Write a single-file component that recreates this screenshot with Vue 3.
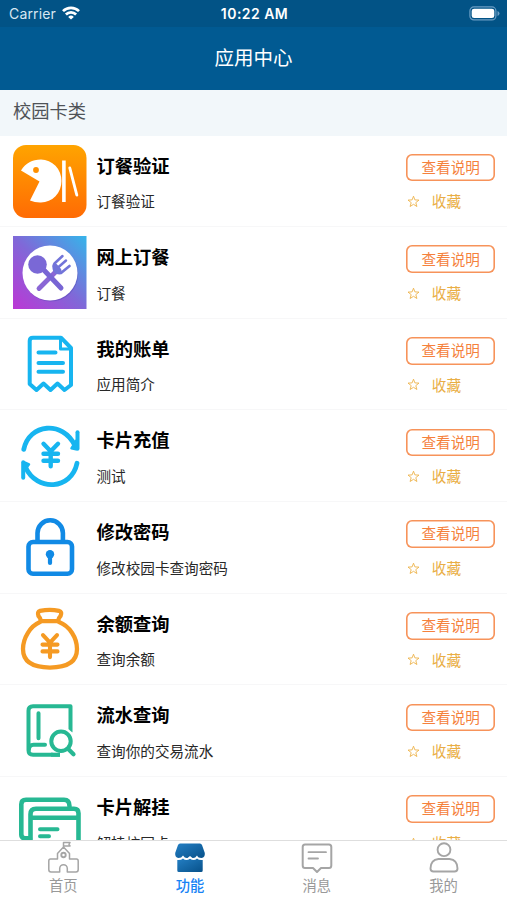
<script setup>
const apps = [
  { icon: 'pac', title: '订餐验证', desc: '订餐验证' },
  { icon: 'food', title: '网上订餐', desc: '订餐' },
  { icon: 'bill', title: '我的账单', desc: '应用简介' },
  { icon: 'recharge', title: '卡片充值', desc: '测试' },
  { icon: 'lock', title: '修改密码', desc: '修改校园卡查询密码' },
  { icon: 'bag', title: '余额查询', desc: '查询余额' },
  { icon: 'book', title: '流水查询', desc: '查询你的交易流水' },
  { icon: 'cards', title: '卡片解挂', desc: '解挂校园卡' },
]
const tabs = [
  { icon: 'home', label: '首页' },
  { icon: 'shop', label: '功能', active: true },
  { icon: 'message', label: '消息' },
  { icon: 'user', label: '我的' },
]
</script>

<template>
  <div class="screen">
    <div class="status">
      <div class="carrier">
        <span>Carrier</span>
        <svg class="wifi" width="18" height="14" viewBox="0 0 18 14">
          <g fill="none" stroke="#fff" stroke-width="2.7">
            <path d="M1 5.1a11.4 11.4 0 0 1 16 0" />
            <path d="M3.9 8.5a7.2 7.2 0 0 1 10.2 0" />
          </g>
          <path d="M9 13.6 6.2 10.9a4 4 0 0 1 5.6 0z" fill="#fff" />
        </svg>
      </div>
      <div class="time">10:22 AM</div>
      <div class="battery">
        <svg width="31" height="15" viewBox="0 0 31 15">
          <rect x=".9" y=".9" width="26" height="13" rx="4" fill="none" stroke="#6b9dc4" stroke-width="1.2" />
          <rect x="2.7" y="2.7" width="22.6" height="9.4" rx="2.4" fill="#fff" />
          <path d="M28.5 5v5q2-.8 2-2.5t-2-2.5z" fill="#6b9dc4" />
        </svg>
      </div>
    </div>
    <header class="navbar">应用中心</header>
    <div class="category">校园卡类</div>

    <main class="list">
      <div v-for="app in apps" :key="app.title" class="row">
        <svg class="app-icon" viewBox="0 0 74 74" fill="none" stroke-linecap="round" stroke-linejoin="round">
          <template v-if="app.icon === 'pac'">
            <defs>
              <linearGradient id="pacFill" x1="0" y1="0" x2="0" y2="1">
                <stop offset="0" stop-color="#ffa400" />
                <stop offset="1" stop-color="#ff6b04" />
              </linearGradient>
            </defs>
            <rect width="73.500" height="73" rx="13" fill="url(#pacFill)" />
            <path d="M8 25.500C13 18 19 14.500 28 14.500A20.500 21.500 0 0 1 28 57.500Q22 57.700 17 55.500L26.500 36.500Z" fill="#fff" />
            <circle cx="23" cy="25" r="2.900" fill="#ff9000" />
            <path d="M50.900 15.500V57" stroke="#fff" stroke-width="3.600" stroke-linecap="butt" />
            <path d="M56.800 23 63.800 50" stroke="#fff" stroke-width="2.900" />
          </template>
          <template v-else-if="app.icon === 'food'">
            <defs>
              <linearGradient id="foodFill" x1="0" y1="1" x2="1" y2="0">
                <stop offset="0" stop-color="#bc37d5" />
                <stop offset=".5" stop-color="#8068d8" />
                <stop offset="1" stop-color="#35b5ea" />
              </linearGradient>
            </defs>
            <rect width="73.500" height="73" fill="url(#foodFill)" />
            <circle cx="37.700" cy="38" r="27.500" fill="#4c43ae" opacity=".4" />
            <circle cx="37" cy="37" r="27.500" fill="#fff" />
            <path d="M26 52.500 44.500 34" stroke="#8a66d5" stroke-width="4.800" />
            <path d="M28 31 48 52" stroke="#7865d4" stroke-width="5" />
            <path d="M41 28.500Q39.500 38 48 37L56.500 30" stroke="#7274d9" stroke-width="2.700" />
            <path d="M41.500 27.500 49.500 20M45 31.500 53 24.500" stroke="#7274d9" stroke-width="2.500" />
            <path d="M42 30 46 34.500" stroke="#7274d9" stroke-width="5" />
            <circle cx="24.500" cy="28.500" r="9.300" fill="#7a68d6" />
          </template>
          <g v-else-if="app.icon === 'bill'" stroke="#17b5f0" stroke-width="4">
            <path d="M20 9.700H48L58 20V57L51.500 62 44.500 55.500 37.500 62 30.500 55.500 23.500 62 16.700 56V13Q16.700 9.700 20 9.700Z" />
            <path d="M47.500 10.500V21H57.500" stroke-width="3" />
            <path d="M25.500 24.500H42.500M25.500 35H50M25.500 43.700H50" />
          </g>
          <g v-else-if="app.icon === 'recharge'" transform="translate(0 .8)" stroke="#17b5f0" stroke-width="4.800">
            <path d="M10.800 29.500C16 3.500 50 .5 62 26" />
            <path d="M64.500 12.500V29" stroke-width="4" />
            <path d="M63 21V29.500L58.500 28.500Z" fill="#17b5f0" stroke-width="2.500" />
            <path d="M64 43.500C58.500 70 24 72.500 12.500 47.500" />
            <path d="M10.200 42.500V58" stroke-width="4" />
            <path d="M11.500 50.500V42.500L16 44.500Z" fill="#17b5f0" stroke-width="2.500" />
            <path d="M30.500 24 37.700 31.500 45 24M37.700 32V46.500M30.500 34H45M30.500 41H45" stroke-width="4.400" />
          </g>
          <g v-else-if="app.icon === 'lock'" stroke="#118ae5" stroke-width="4.600">
            <rect x="15.500" y="31" width="43.500" height="31.800" rx="4.500" />
            <path d="M24.500 30V22a12.700 12.700 0 0 1 25.400 0V30" />
            <circle cx="37" cy="43.300" r="4.200" fill="#118ae5" stroke="none" />
            <path d="M37 44V52" stroke-width="4.200" />
          </g>
          <g v-else-if="app.icon === 'bag'" transform="translate(0 .6)" stroke="#f59a23" stroke-width="4.300">
            <path d="M28 17.500Q27.500 14.500 25.500 12.500 24 8 27 7.200 37 5.500 46 7.200 49.500 8 47.500 12.500 45.500 14.500 45 17.500Z" />
            <path d="M27 18.500C17.500 22.500 10 34 10 45.500 10 59 20 64 37 64S64 59 64 45.500C64 34 56.500 22.500 46 18.500" />
            <path d="M30 31.500 37 39 44 31.500M37 39V53.500M29.500 41H44.500M29.500 47.800H44.500" stroke-width="4.100" />
          </g>
          <g v-else-if="app.icon === 'book'" transform="translate(0 .2)" stroke="#27b893" stroke-width="4">
            <path d="M57.500 38V12H20Q15.500 12 15.500 16.500V56Q15.500 60.500 20 60.500H47" stroke-linecap="butt" />
            <path d="M25.500 19V44M16 55Q16 50.500 20.500 50.500H32" />
            <circle cx="48" cy="47" r="14" fill="#fff" stroke="none" />
            <path d="M38 60.500H47" stroke-linecap="butt" />
            <circle cx="48" cy="47" r="9.700" />
            <path d="M55 54.500 60.500 60" stroke-width="4.200" />
          </g>
          <g v-else transform="translate(0 .3)" stroke="#27b893" stroke-width="4.600">
            <path d="M17 52H12Q8.300 52 8.300 48V18Q8.300 13.500 13 13.500H51Q56.500 13.500 56.500 20" />
            <path d="M17.500 70V28Q17.500 22.500 23 22.500H61Q65.500 22.500 65.500 27V70M18 31.500H65" />
            <path d="M27 43H44.500M27 50H36" stroke-width="4" />
          </g>
        </svg>
        <div class="info">
          <div class="title">{{ app.title }}</div>
          <div class="desc">{{ app.desc }}</div>
        </div>
        <div class="actions">
          <button class="explain">查看说明</button>
          <div class="favorite">
            <svg width="13" height="13" viewBox="0 0 13 13">
              <path d="M6.500 1.200 7.900 4.900 12 5.100 8.800 7.600 9.900 11.500 6.500 9.300 3.100 11.500 4.200 7.600 1 5.100 5.100 4.900Z" fill="none" stroke="#edb34c" stroke-width=".9" />
            </svg>
            <span>收藏</span>
          </div>
        </div>
      </div>
    </main>

    <nav class="tabs">
      <div v-for="tab in tabs" :key="tab.label" class="tab" :class="{ active: tab.active }">
        <svg width="34" height="34" viewBox="0 0 34 34" fill="none" stroke="#a5a5a5" stroke-width="1.5" stroke-linejoin="round" stroke-linecap="round">
          <template v-if="tab.icon === 'home'">
            <path d="M17.500 6V1.500H24L23 3.300 24 5H17.500M17.500 6 11.500 12.500V18H4.500Q2.800 18 2.800 20V28.500Q2.800 31 5 31H13.700V27.500a3.800 3.800 0 0 1 7.600 0V31H30Q32.200 31 32.200 28.500V20Q32.200 18 30.500 18H23.500V12.500Z" />
            <circle cx="17.500" cy="14" r="2.200" stroke-width="1.900" />
          </template>
          <template v-else-if="tab.icon === 'shop'">
            <defs>
              <linearGradient id="shopFill" x1="0" y1="0" x2="1" y2="1">
                <stop offset="0" stop-color="#247fc4" />
                <stop offset="1" stop-color="#07518a" />
              </linearGradient>
            </defs>
            <g transform="translate(0 .5)" fill="url(#shopFill)" stroke="none">
              <path d="M7 2H27Q28.300 2 29 3.500L31.800 11.500Q32.200 16 28.500 16.500 25 16.500 24 14 22 17 19.500 16.500L17 14.500 14.500 16.500Q12 17 10 14 8.500 16.500 5.500 16.500 1.800 16 2.200 11.500L5 3.500Q5.700 2 7 2Z" />
              <path d="M4.300 18.500Q8 19 10 17 13 20 17 17.300 21 20 24 17 26 19 29.700 18.500V29Q29.700 30.500 28.200 30.500H5.800Q4.300 30.500 4.300 29Z" />
            </g>
          </template>
          <g v-else-if="tab.icon === 'message'" transform="translate(0 .5)" stroke-width="2">
            <path d="M5 3H29Q31.300 3 31.300 5.500V24Q31.300 26.500 29 26.500H21L17 30.500 13 26.500H5Q2.700 26.500 2.700 24V5.500Q2.700 3 5 3Z" />
            <path d="M8.500 10.700H26M8.500 17H18" stroke-width="1.800" />
          </g>
          <g v-else stroke-width="1.900">
            <circle cx="17" cy="8.700" r="6.400" />
            <path d="M11.500 18H22.500Q30.500 19 30.500 27.500 30.500 30.500 27.500 30.500H6.500Q3.500 30.500 3.500 27.500 3.500 19 11.500 18Z" />
          </g>
        </svg>
        <span>{{ tab.label }}</span>
      </div>
    </nav>
  </div>
</template>

<style>
body {
  margin: 0;
  overflow: hidden;
}
</style>

<style scoped>
.screen {
  width: 507px;
  height: 900px;
  display: flex;
  flex-direction: column;
  overflow: hidden;
  background: #fff;
  font-family: Inter, "Noto Sans CJK SC", sans-serif;
}
.status {
  flex: none;
  height: 27px;
  box-sizing: border-box;
  padding: 0 7px 0 9px;
  display: grid;
  grid-template-columns: 1fr auto 1fr;
  align-items: center;
  background: #025386;
  color: #fff;
  font-size: 14px;
  line-height: 27px;
}
.carrier {
  display: flex;
  align-items: center;
  gap: 6px;
  color: #d8e7f2;
  letter-spacing: .15px;
}
.wifi {
  margin-bottom: 2px;
}
.time {
  font-weight: 600;
  letter-spacing: .45px;
}
.battery {
  display: flex;
  justify-content: flex-end;
}
.navbar {
  flex: none;
  height: 63px;
  box-sizing: border-box;
  padding-bottom: 4px;
  background: #015a92;
  color: #fff;
  font-size: 19.5px;
  line-height: 59px;
  text-align: center;
  font-family: "Noto Sans CJK SC", sans-serif;
}
.category {
  flex: none;
  height: 45.5px;
  box-sizing: border-box;
  padding: 0 13px 4px;
  background: #f2f7fa;
  color: #4f5357;
  font-size: 18.3px;
  line-height: 41px;
  font-family: "Noto Sans CJK SC", sans-serif;
}
.list {
  flex: 1;
  min-height: 0;
  overflow: hidden;
  font-family: "Noto Sans CJK SC", sans-serif;
}
.row {
  height: 91.66px;
  box-sizing: border-box;
  padding: 9px 12px 0 13px;
  border-bottom: 1px solid #f7f7f8;
  display: flex;
}
.app-icon {
  flex: none;
  width: 74px;
  height: 74px;
}
.info {
  flex: 1;
  padding: 6px 0 0 9.5px;
}
.title {
  color: #000;
  font-size: 18.3px;
  line-height: 28px;
  font-weight: 700;
}
.desc {
  margin-top: 10.6px;
  color: #282828;
  font-size: 14.6px;
  line-height: 24px;
}
.actions {
  padding-top: 9.3px;
}
.explain {
  display: block;
  width: 88.7px;
  height: 27.7px;
  padding: 0 0 1.6px;
  border: 0;
  border-radius: 6px;
  box-shadow: inset 0 0 0 1.6px #f7935a;
  background: #fff;
  color: #f5813c;
  font-family: inherit;
  font-size: 14.6px;
  line-height: 24px;
  text-align: center;
}
.favorite {
  display: flex;
  align-items: center;
  gap: 12px;
  margin-top: 8px;
  padding-left: .5px;
  color: #e9ae45;
  font-size: 14.6px;
  line-height: 24px;
}
.tabs {
  flex: none;
  height: 60px;
  box-sizing: border-box;
  border-top: 1px solid #dedede;
  display: grid;
  grid-template-columns: repeat(4, 1fr);
  background: #fff;
}
.tab {
  display: flex;
  flex-direction: column;
  align-items: center;
  color: #999;
  font-family: "Noto Sans CJK SC", sans-serif;
  font-size: 14.3px;
  line-height: 20px;
}
.tab svg {
  flex: none;
}
.tab.active {
  color: #1683f5;
  font-weight: 500;
}
</style>
